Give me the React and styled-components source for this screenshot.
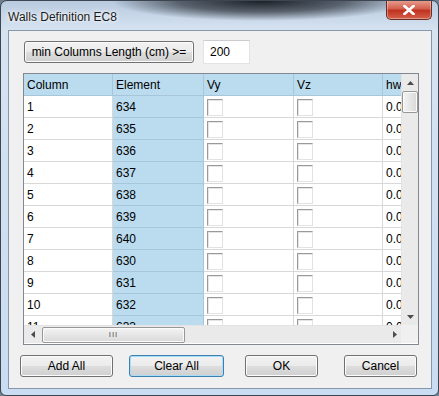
import React from 'react';
import styled, { createGlobalStyle } from 'styled-components';

const Global = createGlobalStyle`
  html, body { margin: 0; padding: 0; background: #6f7f8f; }
  body { font-family: "Liberation Sans", "DejaVu Sans", sans-serif; font-size: 12px; color: #000; }
`;

const Window = styled.div`
  box-sizing: border-box;
  width: 439px;
  height: 396px;
  border: 1px solid #3d4650;
  border-radius: 7px 7px 6px 6px;
  background:
    radial-gradient(ellipse 150px 20px at 260px 0px, rgba(20,24,30,0.95), rgba(20,24,30,0.6) 55%, rgba(20,24,30,0) 100%),
    linear-gradient(to bottom, #b9cbe0 0px, #d6e3f1 30px, #c9dcf1 100%);
  display: flex;
  flex-direction: column;
  padding: 0 6px 6px 7px;
  overflow: hidden;
`;

const TitleBar = styled.div`
  height: 29px;
  display: flex;
  align-items: flex-start;
  justify-content: space-between;
`;

const Title = styled.div`
  padding-top: 9px;
  font-size: 12px;
  color: #1a1a1a;
  text-shadow: 0 0 6px #fff, 0 0 3px #fff;
`;

const CloseButton = styled.div`
  width: 44px;
  height: 19px;
  margin-top: -1px;
  border: 1px solid #6b2c24;
  border-top: none;
  border-radius: 0 0 5px 5px;
  background: linear-gradient(to bottom, #e9a293 0%, #d46150 45%, #c0331f 55%, #d4604b 100%);
  display: flex;
  align-items: center;
  justify-content: center;
  box-shadow: inset 0 0 0 1px rgba(255,255,255,0.35);
`;

const Client = styled.div`
  flex: 1;
  box-sizing: border-box;
  border: 1px solid #8596ad;
  background: #f0f0f0;
  display: flex;
  flex-direction: column;
  padding: 9px 0 0 0;
`;

const TopRow = styled.div`
  display: flex;
  align-items: center;
  padding-left: 15px;
  gap: 9px;
`;

const Button = styled.button`
  box-sizing: border-box;
  width: ${p => p.$w}px;
  height: 22px;
  margin-left: ${p => p.$ml || 0}px;
  padding: 0;
  font-family: inherit;
  font-size: 12px;
  color: #000;
  border: 1px solid ${p => (p.$focused ? '#3c7fb1' : '#707070')};
  border-radius: 3px;
  background: linear-gradient(to bottom, #f2f2f2 0%, #ebebeb 48%, #dddddd 52%, #cfcfcf 100%);
  box-shadow: inset 0 0 0 1px ${p => (p.$focused ? '#a9dcf6' : '#fcfcfc')};
`;

const TextBox = styled.div`
  box-sizing: border-box;
  width: 47px;
  height: 24px;
  background: #fff;
  border: 1px solid #e1e3e6;
  border-top-color: #c9ccd1;
  padding: 4px 0 0 6px;
`;

const Grid = styled.div`
  box-sizing: border-box;
  margin: 9px 0 0 14px;
  width: 396px;
  height: 272px;
  border: 1px solid #828790;
  background: #fff;
  display: grid;
  grid-template-columns: 377px 17px;
  grid-template-rows: 251px 18px;
`;

const Viewport = styled.div`
  overflow: hidden;
`;

const Row = styled.div`
  display: flex;
  height: 22px;
  white-space: nowrap;
`;

const Cell = styled.div`
  box-sizing: border-box;
  flex: 0 0 ${p => p.$w}px;
  height: 22px;
  padding: 4px 0 0 3px;
  background: ${p => (p.$blue ? '#bbdcef' : '#fff')};
  border-right: 1px solid ${p => (p.$blue ? '#a7c6da' : '#d8d8d8')};
  border-bottom: 1px solid ${p => (p.$blue ? '#a7c6da' : '#d8d8d8')};
  overflow: hidden;
`;

const Check = styled.div`
  box-sizing: border-box;
  width: 16px;
  height: 17px;
  margin: -1px 0 0 0;
  background: #fff;
  border: 1px solid #e2e2e2;
  border-top-color: #9a9a9a;
  border-left-color: #9a9a9a;
  box-shadow: inset 1px 1px 0 #e5e5e5;
`;

const VScroll = styled.div`
  background: #eaeaea;
  border-left: 1px solid #e3e3e3;
  display: flex;
  flex-direction: column;
  justify-content: space-between;
`;

const HScroll = styled.div`
  background: #eaeaea;
  border-top: 1px solid #e3e3e3;
  display: flex;
  align-items: center;
  justify-content: space-between;
  padding-right: 4px;
`;

const Corner = styled.div`
  background: #f0f0f0;
`;

const Arrow = styled.div`
  width: ${p => p.$w || 17}px;
  height: ${p => p.$h || 17}px;
  display: flex;
  align-items: center;
  justify-content: center;
`;

const Thumb = styled.div`
  box-sizing: border-box;
  width: ${p => p.$w}px;
  height: ${p => p.$h}px;
  margin: ${p => p.$m};
  border: 1px solid #979797;
  border-radius: 2px;
  background: linear-gradient(${p => (p.$vertical ? 'to right' : 'to bottom')}, #f4f4f4, #e6e6e6 50%, #d9d9d9);
  box-shadow: inset 0 0 0 1px #fbfbfb;
  display: flex;
  align-items: center;
  justify-content: center;
  color: #555;
  font-size: 8px;
  letter-spacing: 1px;
`;

const HLeft = styled.div`
  display: flex;
  align-items: center;
`;

const BottomRow = styled.div`
  display: flex;
  margin-top: 10px;
  padding-left: 11px;
`;

const rows = [
  ['1', '634'], ['2', '635'], ['3', '636'], ['4', '637'], ['5', '638'], ['6', '639'],
  ['7', '640'], ['8', '630'], ['9', '631'], ['10', '632'], ['11', '633'],
];

const widths = [89, 91, 90, 89, 40];

const Tri = ({ dir }) => {
  const pts = {
    up: '0,4 3.5,0 7,4',
    down: '0,0 3.5,4 7,0',
    left: '4,0 0,3.5 4,7',
    right: '0,0 4,3.5 0,7',
  }[dir];
  const vert = dir === 'up' || dir === 'down';
  return (
    <svg width={vert ? 7 : 4} height={vert ? 4 : 7}>
      <polygon points={pts} fill="#4d4d4d" />
    </svg>
  );
};

export default function App() {
  return (
    <>
      <Global />
      <Window>
        <TitleBar>
          <Title>Walls Definition EC8</Title>
          <CloseButton>
            <svg width="12" height="10" viewBox="0 0 12 10">
              <path d="M1.5 1 L10.5 9 M10.5 1 L1.5 9" stroke="#fff" strokeWidth="2.6" strokeLinecap="square" />
            </svg>
          </CloseButton>
        </TitleBar>
        <Client>
          <TopRow>
            <Button $w={170}>min Columns Length (cm) &gt;=</Button>
            <TextBox>200</TextBox>
          </TopRow>
          <Grid>
            <Viewport>
              <Row>
                {['Column', 'Element', 'Vy', 'Vz', 'hw'].map((h, i) => (
                  <Cell key={h} $w={widths[i]} $blue>{h}</Cell>
                ))}
              </Row>
              {rows.map(([c, e]) => (
                <Row key={c}>
                  <Cell $w={widths[0]}>{c}</Cell>
                  <Cell $w={widths[1]} $blue>{e}</Cell>
                  <Cell $w={widths[2]}><Check /></Cell>
                  <Cell $w={widths[3]}><Check /></Cell>
                  <Cell $w={widths[4]}>0.0</Cell>
                </Row>
              ))}
            </Viewport>
            <VScroll>
              <div>
                <Arrow $w={16}><Tri dir="up" /></Arrow>
                <Thumb $vertical $w={16} $h={22} $m="0">{''}</Thumb>
              </div>
              <Arrow $w={16}><Tri dir="down" /></Arrow>
            </VScroll>
            <HScroll>
              <HLeft>
                <Arrow $h={17}><Tri dir="left" /></Arrow>
                <Thumb $w={143} $h={16} $m="0 0 0 1px">III</Thumb>
              </HLeft>
              <Tri dir="right" />
            </HScroll>
            <Corner />
          </Grid>
          <BottomRow>
            <Button $w={93}>Add All</Button>
            <Button $w={95} $ml={16} $focused>Clear All</Button>
            <Button $w={73} $ml={21}>OK</Button>
            <Button $w={73} $ml={26}>Cancel</Button>
          </BottomRow>
        </Client>
      </Window>
    </>
  );
}
